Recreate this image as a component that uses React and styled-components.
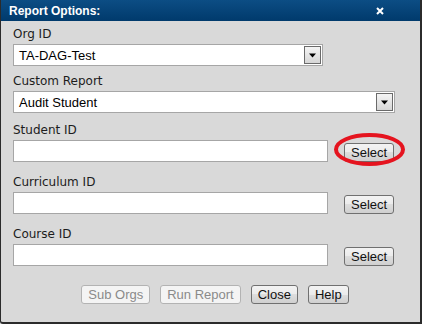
import React from "react";
import styled, { createGlobalStyle } from "styled-components";

const GlobalStyle = createGlobalStyle`
  body {
    margin: 0;
    background: #d9d9d9;
  }
`;

const fields = [
  { label: "Org ID", type: "select", value: "TA-DAG-Test", width: 310, top: 0 },
  { label: "Custom Report", type: "select", value: "Audit Student", width: 382, top: 7 },
  { label: "Student ID", type: "input", top: 9, circled: true },
  { label: "Curriculum ID", type: "input", top: 12 },
  { label: "Course ID", type: "input", top: 12 },
];

const App = () => {
  return (
    <>
      <GlobalStyle />
      <Dialog>
        <TitleBar>
          <Title>Report Options:</Title>
          <CloseIcon viewBox="0 0 8 8">
            <path d="M1 1 L7 7 M7 1 L1 7" />
          </CloseIcon>
        </TitleBar>
        <Body>
          {fields.map((f) => (
            <Field key={f.label} $top={f.top}>
              <Label>{f.label}</Label>
              {f.type === "select" ? (
                <Dropdown $width={f.width}>
                  <span>{f.value}</span>
                  <ArrowBox>
                    <svg width="7" height="5" viewBox="0 0 7 5">
                      <polygon points="0,0.5 7,0.5 3.5,4.5" fill="#000" />
                    </svg>
                  </ArrowBox>
                </Dropdown>
              ) : (
                <Row>
                  <TextBox />
                  <ButtonWrap>
                    <Button>Select</Button>
                    {f.circled && (
                      <Circle viewBox="0 0 71 33">
                        <ellipse cx="35.5" cy="16.5" rx="33.5" ry="14.5" />
                      </Circle>
                    )}
                  </ButtonWrap>
                </Row>
              )}
            </Field>
          ))}
          <Footer>
            <Button disabled>Sub Orgs</Button>
            <Button disabled>Run Report</Button>
            <Button>Close</Button>
            <Button>Help</Button>
          </Footer>
        </Body>
      </Dialog>
    </>
  );
};

export default App;

const Dialog = styled.div`
  width: 422px;
  height: 324px;
  box-sizing: border-box;
  background: #d9d9d9;
  border-left: 1px solid #2b2b2b;
  border-right: 2px solid #2b2b2b;
  border-bottom: 2px solid #2b2b2b;
  border-bottom-left-radius: 3px;
  display: flex;
  flex-direction: column;
`;

const TitleBar = styled.div`
  height: 21px;
  background: linear-gradient(#0c4d84, #003a6c);
  display: flex;
  align-items: center;
  justify-content: space-between;
  padding: 0 36px 0 8px;
`;

const Title = styled.div`
  font-family: "Liberation Sans", Arial, sans-serif;
  font-weight: bold;
  font-size: 12px;
  color: #ffffff;
`;

const CloseIcon = styled.svg`
  width: 8px;
  height: 8px;
  stroke: #ffffff;
  stroke-width: 2;
  fill: none;
`;

const Body = styled.div`
  padding: 5px 0 0 12px;
  display: flex;
  flex-direction: column;
`;

const Field = styled.div`
  display: flex;
  flex-direction: column;
  margin-top: ${(p) => p.$top}px;
`;

const Label = styled.div`
  font-family: "DejaVu Sans", Verdana, sans-serif;
  font-size: 12px;
  line-height: 16px;
  color: #1c1c1c;
  margin-bottom: 2px;
`;

const Dropdown = styled.div`
  width: ${(p) => p.$width}px;
  height: 22px;
  box-sizing: border-box;
  border: 1px solid #a6a6a6;
  background: #ffffff;
  display: flex;
  align-items: center;
  padding-left: 5px;
  font-family: "Liberation Sans", Arial, sans-serif;
  font-size: 13px;
  color: #000;
`;

const ArrowBox = styled.div`
  margin-left: auto;
  margin-right: 1px;
  width: 17px;
  height: 18px;
  box-sizing: border-box;
  border: 1px solid #6a6a6a;
  background: linear-gradient(#f4f4f4, #d6d6d6);
  display: flex;
  align-items: center;
  justify-content: center;
`;

const Row = styled.div`
  display: flex;
  align-items: flex-end;
`;

const TextBox = styled.div`
  width: 315px;
  height: 22px;
  box-sizing: border-box;
  border: 1px solid #a6a6a6;
  background: #ffffff;
`;

const ButtonWrap = styled.div`
  position: relative;
  margin-left: 16px;
  display: flex;
`;

const Button = styled.button`
  height: 19px;
  box-sizing: border-box;
  padding: 0 6px;
  border: 1px solid ${(p) => (p.disabled ? "#b3b3b3" : "#707070")};
  border-radius: 3px;
  background: ${(p) =>
    p.disabled
      ? "#f4f4f4"
      : "linear-gradient(#f3f3f3, #ebebeb 50%, #dddddd 50%, #d0d0d0)"};
  font-family: "Liberation Sans", Arial, sans-serif;
  font-size: 13px;
  line-height: 17px;
  color: ${(p) => (p.disabled ? "#8a8a8a" : "#111111")};
  margin: 0;
`;

const Circle = styled.svg`
  position: absolute;
  left: -10px;
  top: -10px;
  width: 71px;
  height: 33px;
  fill: none;
  stroke: #e5141f;
  stroke-width: 4;
  pointer-events: none;
`;

const Footer = styled.div`
  margin-top: 19px;
  display: flex;
  justify-content: center;
  gap: 10px;
  margin-left: -3px;
`;
